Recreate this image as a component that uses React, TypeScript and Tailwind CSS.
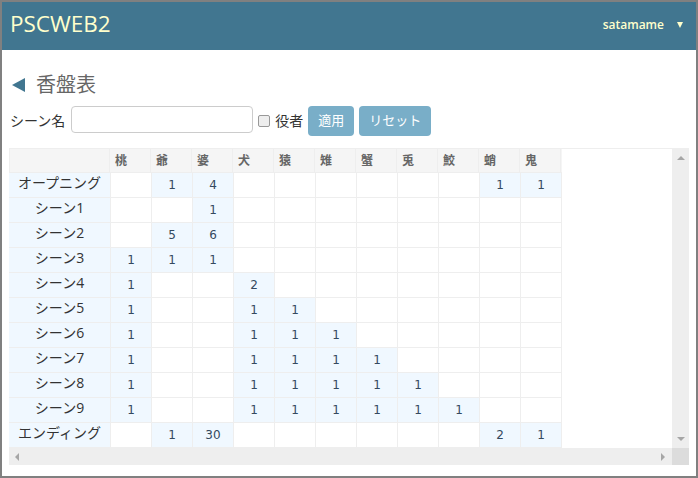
import React from 'react';

const cast = ['桃', '爺', '婆', '犬', '猿', '雉', '蟹', '兎', '鮫', '蛸', '鬼'];

const rows: { name: string; cells: (number | null)[] }[] = [
  { name: 'オープニング', cells: [null, 1, 4, null, null, null, null, null, null, 1, 1] },
  { name: 'シーン1', cells: [null, null, 1, null, null, null, null, null, null, null, null] },
  { name: 'シーン2', cells: [null, 5, 6, null, null, null, null, null, null, null, null] },
  { name: 'シーン3', cells: [1, 1, 1, null, null, null, null, null, null, null, null] },
  { name: 'シーン4', cells: [1, null, null, 2, null, null, null, null, null, null, null] },
  { name: 'シーン5', cells: [1, null, null, 1, 1, null, null, null, null, null, null] },
  { name: 'シーン6', cells: [1, null, null, 1, 1, 1, null, null, null, null, null] },
  { name: 'シーン7', cells: [1, null, null, 1, 1, 1, 1, null, null, null, null] },
  { name: 'シーン8', cells: [1, null, null, 1, 1, 1, 1, 1, null, null, null] },
  { name: 'シーン9', cells: [1, null, null, 1, 1, 1, 1, 1, 1, null, null] },
  { name: 'エンディング', cells: [null, 1, 30, null, null, null, null, null, null, 2, 1] },
];

const jp = 'font-["Open_Sans","Noto_Sans_CJK_JP",sans-serif]';

export default function App() {
  return (
    <div className={`w-[698px] h-[478px] border-2 border-[#808080] bg-white overflow-hidden flex flex-col text-[#333] ${jp}`}>
      <header className="h-[48px] shrink-0 bg-[#417690] flex items-center justify-between pl-[8px] pr-[13px]">
        <span className="text-[22.5px] leading-[28px] text-[#ffffcc] mt-[-4px] font-['Open_Sans',sans-serif]">PSCWEB2</span>
        <div className="flex items-center text-[#ffffcc] text-[12px] font-semibold gap-[13px] mt-[-2px]">
          <span>satamame</span>
          <span className="w-0 h-0 border-l-[3.5px] border-r-[3.5px] border-t-[6px] border-l-transparent border-r-transparent border-t-[#ffffcc]" />
        </div>
      </header>

      <main className="flex-1 flex flex-col pl-[7px] pr-[7px]">
        <div className="flex items-center mt-[22px] h-[26px] gap-[11px] pl-[3px]">
          <span className="w-0 h-0 border-t-[7px] border-b-[7px] border-r-[13px] border-t-transparent border-b-transparent border-r-[#417690]" />
          <h1 className="text-[20px] leading-[26px] text-[#666] font-normal">香盤表</h1>
        </div>

        <div className="flex items-center mt-[8px] h-[30px] pl-[1px] text-[14px]">
          <label className="mb-[2px]">シーン名</label>
          <input className="ml-[6px] mb-[4px] w-[182px] h-[27px] border border-[#ccc] rounded-[4px] bg-white" />
          <span className="ml-[5px] w-[12px] h-[12px] border border-[#999] rounded-[2px] bg-[#eee]" />
          <span className="ml-[5px] mb-[2px]">役者</span>
          <button className="ml-[5px] h-[30px] w-[46px] rounded-[4px] bg-[#79aec8] text-white text-[13px]">適用</button>
          <button className="ml-[5px] h-[30px] w-[72px] rounded-[4px] bg-[#79aec8] text-white text-[13px]">リセット</button>
        </div>

        <div className="mt-[12px] w-[680px] h-[317px] grid grid-cols-[663px_17px] grid-rows-[299px_17px] border-t border-[#eee]">
          <div className="overflow-hidden">
            <div className="flex h-[24px] w-[553px] bg-[#f5f5f5] border-b border-[#eee] border-l">
              <div className="w-[100px] shrink-0 border-r border-[#eee]" />
              {cast.map((c) => (
                <div key={c} className="w-[41px] shrink-0 border-r border-[#eee] pl-[5px] text-[12px] leading-[23px] font-bold text-[#666]">
                  {c}
                </div>
              ))}
            </div>
            {rows.map((r) => (
              <div key={r.name} className="flex h-[25px]">
                <div className="w-[102px] shrink-0 bg-[#f0f8ff] border-b border-r border-[#eee] text-center text-[14px] leading-[20px] text-[#333]">
                  {r.name}
                </div>
                {r.cells.map((v, i) => (
                  <div
                    key={i}
                    className={`w-[41px] shrink-0 border-b border-r border-[#eee] text-center font-['DejaVu_Sans',sans-serif] text-[12px] leading-[24px] text-[#34495e] ${v !== null ? 'bg-[#f0f8ff]' : 'bg-white'}`}
                  >
                    {v}
                  </div>
                ))}
              </div>
            ))}
          </div>

          <div className="bg-[#eee] flex flex-col items-center justify-between pt-[7px] pb-[7px]">
            <span className="w-0 h-0 border-l-[4px] border-r-[4px] border-b-[4px] border-l-transparent border-r-transparent border-b-[#a6a6a6]" />
            <span className="w-0 h-0 border-l-[4px] border-r-[4px] border-t-[4px] border-l-transparent border-r-transparent border-t-[#a6a6a6]" />
          </div>
          <div className="bg-[#eee] flex items-center justify-between pl-[6px] pr-[7px]">
            <span className="w-0 h-0 border-t-[4px] border-b-[4px] border-r-[4px] border-t-transparent border-b-transparent border-r-[#a6a6a6]" />
            <span className="w-0 h-0 border-t-[4px] border-b-[4px] border-l-[4px] border-t-transparent border-b-transparent border-l-[#a6a6a6]" />
          </div>
          <div className="bg-[#dcdcdc]" />
        </div>
      </main>
    </div>
  );
}
